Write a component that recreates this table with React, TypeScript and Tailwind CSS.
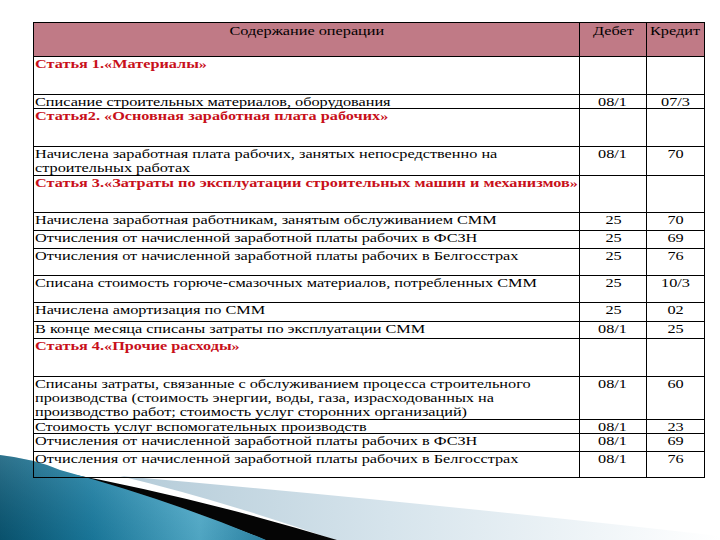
import React from "react";

type Row = {
  lines: string[];
  head?: boolean;
  d?: string;
  k?: string;
  h: number;
};

const rows: Row[] = [
  { lines: ["Статья 1.«Материалы»"], head: true, h: 38 },
  { lines: ["Списание строительных материалов, оборудования"], d: "08/1", k: "07/3", h: 14 },
  { lines: ["Статья2. «Основная заработная плата рабочих»"], head: true, h: 38 },
  {
    lines: ["Начислена заработная плата рабочих, занятых непосредственно на", "строительных работах"],
    d: "08/1",
    k: "70",
    h: 29,
  },
  { lines: ["Статья 3.«Затраты по эксплуатации строительных машин и механизмов»"], head: true, h: 37 },
  { lines: ["Начислена заработная работникам, занятым обслуживанием СММ"], d: "25", k: "70", h: 18 },
  { lines: ["Отчисления от начисленной заработной платы рабочих в ФСЗН"], d: "25", k: "69", h: 18 },
  { lines: ["Отчисления от начисленной заработной платы рабочих в Белгосстрах"], d: "25", k: "76", h: 27 },
  { lines: ["Списана стоимость горюче-смазочных материалов, потребленных СММ"], d: "25", k: "10/3", h: 27 },
  { lines: ["Начислена амортизация по СММ"], d: "25", k: "02", h: 19 },
  { lines: ["В конце месяца списаны затраты по эксплуатации СММ"], d: "08/1", k: "25", h: 17 },
  { lines: ["Статья 4.«Прочие расходы»"], head: true, h: 38 },
  {
    lines: [
      "Списаны затраты, связанные с обслуживанием процесса строительного",
      "производства (стоимость энергии, воды, газа, израсходованных на",
      "производство работ; стоимость услуг сторонних организаций)",
    ],
    d: "08/1",
    k: "60",
    h: 43,
  },
  { lines: ["Стоимость услуг вспомогательных производств"], d: "08/1", k: "23", h: 14 },
  { lines: ["Отчисления от начисленной заработной платы рабочих в ФСЗН"], d: "08/1", k: "69", h: 18 },
  { lines: ["Отчисления от начисленной заработной платы рабочих в Белгосстрах"], d: "08/1", k: "76", h: 26 },
];

function Swoosh() {
  return (
    <svg
      className="absolute left-0 bottom-0 w-[720px] h-[100px]"
      viewBox="0 440 720 100"
      preserveAspectRatio="none"
    >
      <defs>
        <linearGradient id="pale" x1="0" y1="0" x2="1" y2="0">
          <stop offset="0" stopColor="#b4cbd8" />
          <stop offset="0.45" stopColor="#d6e4ec" />
          <stop offset="1" stopColor="#ffffff" />
        </linearGradient>
        <linearGradient id="blue" x1="0" y1="0" x2="1" y2="0">
          <stop offset="0" stopColor="#0a5a78" />
          <stop offset="0.35" stopColor="#1c82a8" />
          <stop offset="0.75" stopColor="#58b7d7" />
          <stop offset="1" stopColor="#2e8db2" />
        </linearGradient>
        <linearGradient id="shade" x1="0" y1="0" x2="0" y2="1">
          <stop offset="0" stopColor="#ffffff" stopOpacity="0.15" />
          <stop offset="1" stopColor="#000000" stopOpacity="0.1" />
        </linearGradient>
      </defs>
      <path d="M120 476 Q 400 500 720 536 L720 540 L335 540 Q 220 500 120 476 Z" fill="url(#pale)" />
      <path d="M55 471 Q 200 498 337 540 L265 540 Q 180 505 55 473 Z" fill="#050505" />
      <path d="M0 455 Q 35 459 60 470 Q 170 500 266 540 L0 540 Z" fill="url(#blue)" />
      <path d="M0 455 Q 35 459 60 470 Q 170 500 266 540 L0 540 Z" fill="url(#shade)" />
    </svg>
  );
}

// the slide text is stretched sideways, so each text run is widened a bit
function Wide({ children, center }: { children: React.ReactNode; center?: boolean }) {
  return (
    <span
      className={`inline-block whitespace-nowrap scale-x-[1.25] ${center ? "origin-center" : "origin-left"}`}
    >
      {children}
    </span>
  );
}

export default function App() {
  return (
    <div className="relative w-[720px] h-[540px] overflow-hidden bg-white text-black font-['Liberation_Serif','Times_New_Roman',serif]">
      <Swoosh />
      <div className="relative pt-[22px] pl-[33px]">
        <table className="border-collapse table-fixed w-[671px] text-[13px] leading-[13px]">
          <colgroup>
            <col className="w-[546px]" />
            <col className="w-[67px]" />
            <col className="w-[58px]" />
          </colgroup>
          <thead>
            <tr className="h-[34px] bg-[#c07a86]">
              <th className="border border-black align-top font-normal text-center p-0 pt-[1px]">
                <Wide center>Содержание операции</Wide>
              </th>
              <th className="border border-black align-top font-normal text-center p-0 pt-[1px]">
                <Wide center>Дебет</Wide>
              </th>
              <th className="border border-black align-top font-normal text-center p-0 pt-[1px]">
                <Wide center>Кредит</Wide>
              </th>
            </tr>
          </thead>
          <tbody>
            {rows.map((r, i) => (
              <tr key={i} style={{ height: r.h }}>
                <td
                  className={`border border-black align-top p-0 pl-[1px] ${
                    r.head ? "font-bold text-[#c8101a]" : ""
                  } ${r.lines.length > 1 ? "leading-[14px]" : ""}`}
                >
                  {r.lines.map((l, j) => (
                    <div key={j}>
                      <Wide>{l}</Wide>
                    </div>
                  ))}
                </td>
                <td className="border border-black align-top p-0 text-center">
                  {r.d && <Wide center>{r.d}</Wide>}
                </td>
                <td className="border border-black align-top p-0 text-center">
                  {r.k && <Wide center>{r.k}</Wide>}
                </td>
              </tr>
            ))}
          </tbody>
        </table>
      </div>
    </div>
  );
}
